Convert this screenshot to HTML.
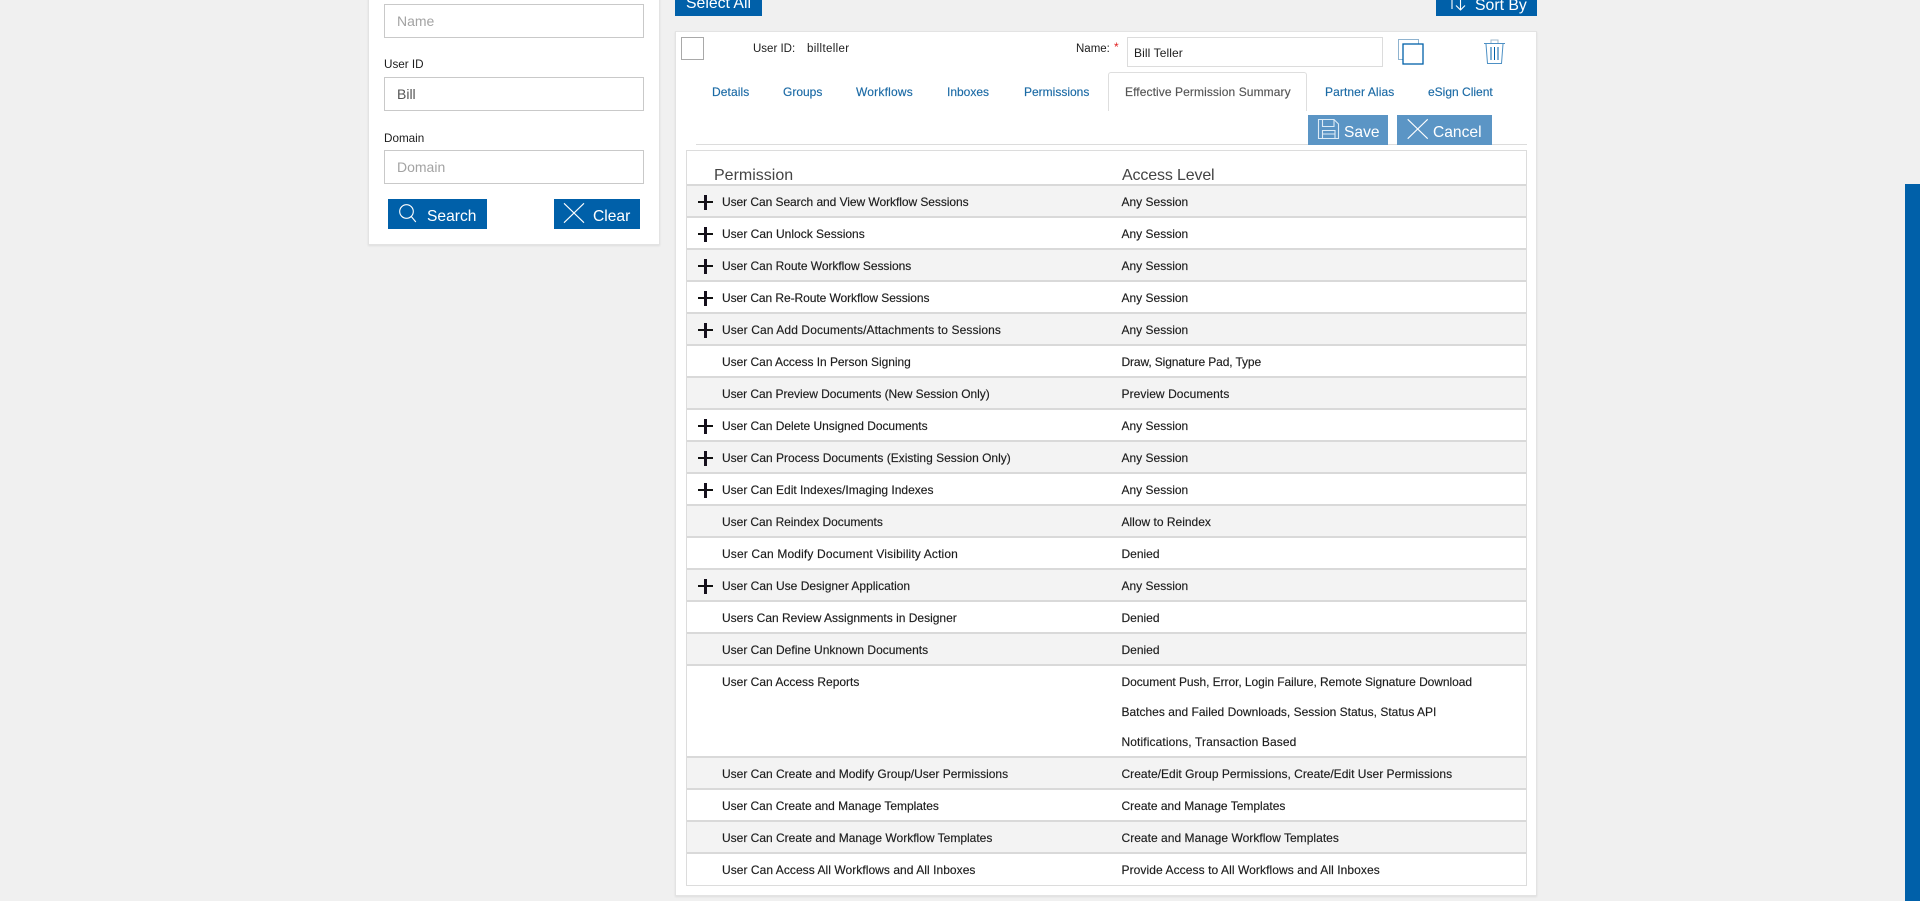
<!DOCTYPE html>
<html lang="en">
<head>
<meta charset="utf-8">
<title>Effective Permission Summary</title>
<style>
html,body{margin:0;padding:0;width:1920px;height:901px;overflow:hidden;background:#f0f0f0;font-family:"Liberation Sans",Arial,sans-serif;color:#1c1c1c}
*{box-sizing:border-box}
.a{position:absolute;white-space:nowrap}
.panel{position:absolute;background:#fff;border:1px solid #e3e3e3;box-shadow:0 1px 2px rgba(0,0,0,.08)}
.inp{position:absolute;left:384px;width:260px;height:34px;background:#fff;border:1px solid #c9c9c9;font-size:14px;line-height:32px;padding-left:12px;color:#a3a3a3}
.lab{position:absolute;left:384px;font-size:11.7px;line-height:14px;color:#1c1c1c}
.btn{position:absolute;background:#0060a9;color:#fff;font-size:15.6px;white-space:nowrap}
.tab{position:absolute;top:85px;font-size:12px;line-height:14px;color:#1b6aa5;white-space:nowrap;-webkit-text-stroke:.15px}
.row{position:absolute;left:687px;width:839px;height:30px;font-size:12px;line-height:30px;-webkit-text-stroke:.15px}
.g{background:#f3f3f3}
.w{background:#fff}
.row span{position:absolute;white-space:nowrap;top:1px}
.p{left:35px}
.v{left:434.5px}
.sep{position:absolute;left:687px;width:839px;height:2px;background:#d9d9d9}
.plus{position:absolute;left:11px;top:9px;width:15px;height:15px}
.plus:before{content:"";position:absolute;left:0;top:6px;width:15px;height:2px;background:#111}
.plus:after{content:"";position:absolute;left:6px;top:0;width:3px;height:15px;background:#15101c}
svg{position:absolute;overflow:visible}
</style>
</head>
<body>

<!-- left search panel -->
<div class="panel" style="left:368px;top:-10px;width:292px;height:255px"></div>
<div class="inp" style="top:4px">Name</div>
<div class="lab" style="top:58px">User ID</div>
<div class="inp" style="top:77px;color:#555">Bill</div>
<div class="lab" style="top:132px">Domain</div>
<div class="inp" style="top:150px">Domain</div>

<div class="btn" style="left:388px;top:199px;width:99px;height:30px">
  <span class="a" style="left:39px;top:9px;line-height:18px">Search</span>
</div>
<svg style="left:0;top:0" width="1" height="1"><g fill="none" stroke="#fff" stroke-width="1.1"><circle cx="406.5" cy="211.5" r="6.8"/><path d="M411.3 216.5 L415.8 222"/></g></svg>

<div class="btn" style="left:554px;top:199px;width:86px;height:30px">
  <span class="a" style="left:39px;top:9px;line-height:18px">Clear</span>
</div>
<svg style="left:0;top:0" width="1" height="1"><path d="M564 203.3 L584 222.7 M584 203.3 L564 222.7" fill="none" stroke="#fff" stroke-width="1.1"/></svg>

<!-- top buttons -->
<div class="btn" style="left:675px;top:0;width:87px;height:16px;font-size:15.8px">
  <span class="a" style="left:11px;top:-5px;line-height:18px">Select All</span>
</div>
<div class="btn" style="left:1436px;top:0;width:101px;height:16px;font-size:15.8px">
  <span class="a" style="left:39px;top:-3px;line-height:18px">Sort By</span>
</div>
<svg style="left:0;top:0" width="1" height="1"><path d="M1452 -2 V9 M1460.5 -2 V9.5 M1456 5.5 L1460.5 10 L1465 5.5" fill="none" stroke="#fff" stroke-width="1.1"/></svg>

<!-- main panel -->
<div class="panel" style="left:675px;top:31px;width:862px;height:865px"></div>
<div class="a" style="left:681px;top:37px;width:23px;height:23px;border:1px solid #a9a9a9;background:#fff"></div>
<div class="a" style="left:753px;top:42px;font-size:11.5px;line-height:14px">User ID:</div>
<div class="a" style="left:807px;top:42px;font-size:11.5px;line-height:14px;letter-spacing:.35px">billteller</div>
<div class="a" style="left:1076px;top:42px;font-size:11.5px;line-height:14px">Name:</div>
<div class="a" style="left:1114px;top:40px;font-size:12px;line-height:14px;color:#e02020">*</div>
<div class="a" style="left:1127px;top:37px;width:256px;height:30px;border:1px solid #dcdcdc;background:#fff;font-size:12px;line-height:30px;padding-left:6px;letter-spacing:.1px">Bill Teller</div>

<!-- copy icon -->
<svg style="left:0;top:0" width="1" height="1">
  <rect x="1398.5" y="39.5" width="20" height="20" fill="#fff" stroke="#8fb3cf" stroke-width="1"/>
  <rect x="1403" y="44" width="20" height="20" fill="#fff" stroke="#0060a9" stroke-width="1.3"/>
</svg>
<!-- trash icon -->
<svg style="left:0;top:0" width="1" height="1">
  <g fill="none" stroke="#4d90c4" stroke-width="1">
    <path d="M1484 43.5 H1505"/>
    <path d="M1491 43 V40 H1498 V43" stroke="#9fb9cc"/>
    <path d="M1486 44 L1487.5 63.5 H1501.5 L1503 44"/>
  </g>
  <path d="M1491 47 V60 M1494.5 47 V60 M1498 47 V60" fill="none" stroke="#0060a9" stroke-width="1"/>
</svg>

<!-- tabs -->
<div class="tab" style="left:712px;letter-spacing:.1px">Details</div>
<div class="tab" style="left:783px">Groups</div>
<div class="tab" style="left:856px;letter-spacing:.2px">Workflows</div>
<div class="tab" style="left:947px">Inboxes</div>
<div class="tab" style="left:1024px">Permissions</div>
<div class="a" style="left:1108px;top:72px;width:199px;height:39px;background:#fff;border:1px solid #dedede;border-bottom:none;border-radius:3px 3px 0 0"></div>
<div class="tab" style="left:1125px;color:#555;letter-spacing:.09px">Effective Permission Summary</div>
<div class="tab" style="left:1325px;letter-spacing:.1px">Partner Alias</div>
<div class="tab" style="left:1428px">eSign Client</div>

<div class="a" style="left:696px;top:144px;width:831px;height:1px;background:#dcdcdc"></div>

<!-- save / cancel -->
<div class="btn" style="left:1308px;top:115px;width:80px;height:30px;background:#5b95c5">
  <span class="a" style="left:36px;top:9px;line-height:18px">Save</span>
</div>
<svg style="left:0;top:0" width="1" height="1">
  <g fill="none" stroke="#dcebf6" stroke-width="1.1">
    <path d="M1318.5 119.5 H1334 L1338.5 124 V138.5 H1318.5 Z"/>
    <path d="M1322.5 119.5 V126.5 H1334 V119.5"/>
    <path d="M1322.5 138.5 V130.5 H1335 V138.5 M1322.5 134 H1335"/>
  </g>
</svg>
<div class="btn" style="left:1397px;top:115px;width:95px;height:30px;background:#5b95c5">
  <span class="a" style="left:36px;top:9px;line-height:18px">Cancel</span>
</div>
<svg style="left:0;top:0" width="1" height="1"><path d="M1407.7 119.3 L1427.7 138.7 M1427.7 119.3 L1407.7 138.7" fill="none" stroke="#fff" stroke-width="1.1"/></svg>

<!-- table -->
<div class="a" style="left:686px;top:150px;width:841px;height:736px;background:#fff;border:1px solid #dcdcdc"></div>
<div class="a" style="left:714px;top:167px;font-size:16px;line-height:18px;color:#444">Permission</div>
<div class="a" style="left:1122px;top:167px;font-size:16px;line-height:18px;color:#444;letter-spacing:-.15px">Access Level</div>
<div class="sep" style="top:184px"></div>

<div class="row g" style="top:186px"><i class="plus"></i><span class="p" style="letter-spacing:-.058px">User Can Search and View Workflow Sessions</span><span class="v">Any Session</span></div>
<div class="sep" style="top:216px"></div>
<div class="row w" style="top:218px"><i class="plus"></i><span class="p">User Can Unlock Sessions</span><span class="v">Any Session</span></div>
<div class="sep" style="top:248px"></div>
<div class="row g" style="top:250px"><i class="plus"></i><span class="p" style="letter-spacing:-.04px">User Can Route Workflow Sessions</span><span class="v">Any Session</span></div>
<div class="sep" style="top:280px"></div>
<div class="row w" style="top:282px"><i class="plus"></i><span class="p" style="letter-spacing:-.07px">User Can Re-Route Workflow Sessions</span><span class="v">Any Session</span></div>
<div class="sep" style="top:312px"></div>
<div class="row g" style="top:314px"><i class="plus"></i><span class="p" style="letter-spacing:.106px">User Can Add Documents/Attachments to Sessions</span><span class="v">Any Session</span></div>
<div class="sep" style="top:344px"></div>
<div class="row w" style="top:346px"><span class="p" style="letter-spacing:-.04px">User Can Access In Person Signing</span><span class="v" style="letter-spacing:-.12px">Draw, Signature Pad, Type</span></div>
<div class="sep" style="top:376px"></div>
<div class="row g" style="top:378px"><span class="p" style="letter-spacing:-.054px">User Can Preview Documents (New Session Only)</span><span class="v" style="letter-spacing:.07px">Preview Documents</span></div>
<div class="sep" style="top:408px"></div>
<div class="row w" style="top:410px"><i class="plus"></i><span class="p" style="letter-spacing:-.035px">User Can Delete Unsigned Documents</span><span class="v">Any Session</span></div>
<div class="sep" style="top:440px"></div>
<div class="row g" style="top:442px"><i class="plus"></i><span class="p">User Can Process Documents (Existing Session Only)</span><span class="v">Any Session</span></div>
<div class="sep" style="top:472px"></div>
<div class="row w" style="top:474px"><i class="plus"></i><span class="p">User Can Edit Indexes/Imaging Indexes</span><span class="v">Any Session</span></div>
<div class="sep" style="top:504px"></div>
<div class="row g" style="top:506px"><span class="p" style="letter-spacing:-.05px">User Can Reindex Documents</span><span class="v">Allow to Reindex</span></div>
<div class="sep" style="top:536px"></div>
<div class="row w" style="top:538px"><span class="p" style="letter-spacing:.146px">User Can Modify Document Visibility Action</span><span class="v">Denied</span></div>
<div class="sep" style="top:568px"></div>
<div class="row g" style="top:570px"><i class="plus"></i><span class="p">User Can Use Designer Application</span><span class="v">Any Session</span></div>
<div class="sep" style="top:600px"></div>
<div class="row w" style="top:602px"><span class="p">Users Can Review Assignments in Designer</span><span class="v">Denied</span></div>
<div class="sep" style="top:632px"></div>
<div class="row g" style="top:634px"><span class="p">User Can Define Unknown Documents</span><span class="v">Denied</span></div>
<div class="sep" style="top:664px"></div>
<div class="row w" style="top:666px;height:90px"><span class="p">User Can Access Reports</span><span class="v" style="letter-spacing:-.06px">Document Push, Error, Login Failure, Remote Signature Download</span><span class="v" style="top:31px">Batches and Failed Downloads, Session Status, Status API</span><span class="v" style="top:61px;letter-spacing:.11px">Notifications, Transaction Based</span></div>
<div class="sep" style="top:756px"></div>
<div class="row g" style="top:758px"><span class="p">User Can Create and Modify Group/User Permissions</span><span class="v" style="letter-spacing:.02px">Create/Edit Group Permissions, Create/Edit User Permissions</span></div>
<div class="sep" style="top:788px"></div>
<div class="row w" style="top:790px"><span class="p" style="letter-spacing:-.03px">User Can Create and Manage Templates</span><span class="v">Create and Manage Templates</span></div>
<div class="sep" style="top:820px"></div>
<div class="row g" style="top:822px"><span class="p">User Can Create and Manage Workflow Templates</span><span class="v" style="letter-spacing:.03px">Create and Manage Workflow Templates</span></div>
<div class="sep" style="top:852px"></div>
<div class="row w" style="top:854px"><span class="p" style="letter-spacing:.05px">User Can Access All Workflows and All Inboxes</span><span class="v" style="letter-spacing:.08px">Provide Access to All Workflows and All Inboxes</span></div>

<!-- right side bar -->
<div class="a" style="left:1905px;top:184px;width:15px;height:717px;background:#0060a9"></div>

</body>
</html>
